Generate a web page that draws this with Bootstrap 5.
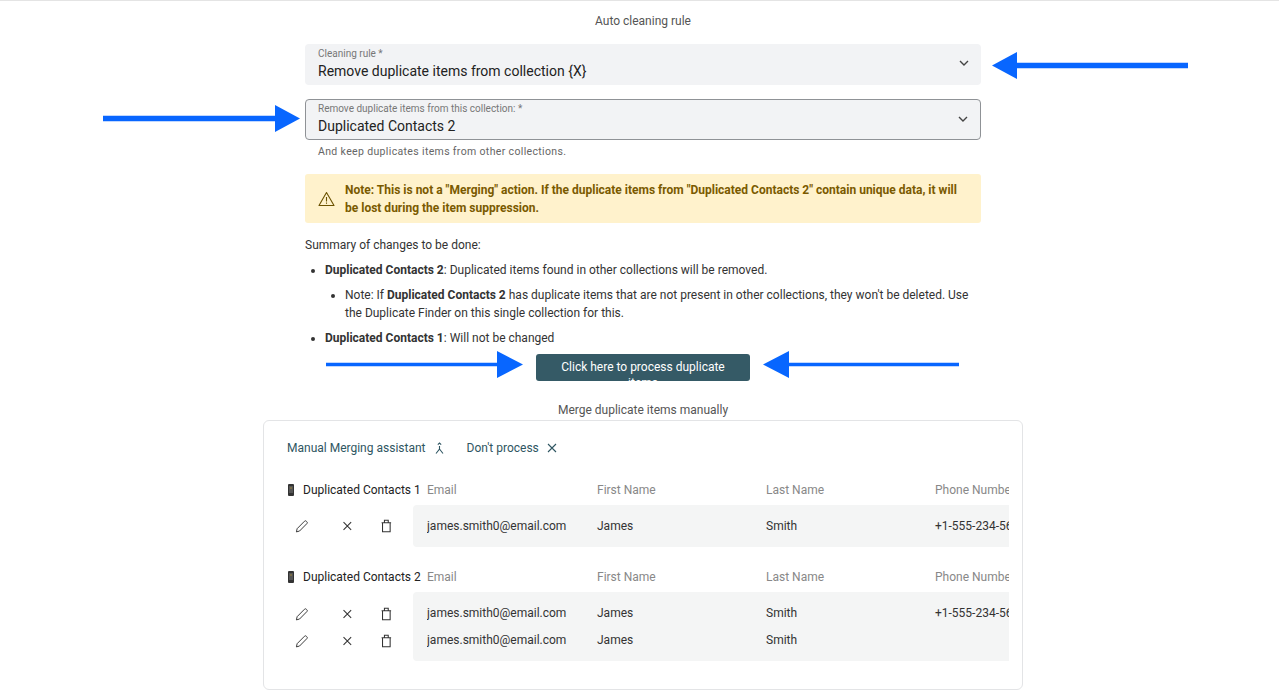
<!DOCTYPE html>
<html lang="en">
<head>
<meta charset="utf-8">
<title>Auto cleaning rule</title>
<link href="https://cdn.jsdelivr.net/npm/bootstrap@5.3.0/dist/css/bootstrap.min.css" rel="stylesheet">
<style>
html,body{height:700px;overflow:hidden}
body{font-family:Roboto,"Liberation Sans",sans-serif;color:#212529;background:#fff;border-top:1px solid #e4e4e4;position:relative;font-size:12px}
.pg{width:760px;margin-left:263px}
.head-t{height:43px;padding-top:13px;line-height:14px;text-align:center;color:#555;font-size:12px}
.form-area{width:676px;margin-left:42px}
.sel{height:41px;background:#f2f3f5;border-radius:4px;padding:4px 12px 0 13px;position:relative;margin-bottom:14px}
.sel.outl{border:1px solid #8f9296;padding:3px 11px 0 12px;margin-bottom:0}
.sel-l{font-size:10px;line-height:12px;color:#777;white-space:nowrap}
.sel-v{font-size:14px;line-height:20px;margin-top:1px;color:#222}
.chev{position:absolute;right:11px;top:15px;width:12px;height:8px}
.help-t{font-size:10.5px;letter-spacing:.35px;line-height:14px;color:#666;padding:5px 0 0 13px;height:34px}
.warn-box{height:49px;background:#fff2cc;border-radius:3px;color:#7a5a00;font-weight:700;font-size:12px;line-height:18px;padding:0 14px 0 13px;gap:10px;margin-bottom:14px}
.sum-p{line-height:16px;margin:0 0 8px;color:#333}
.sum-l{list-style:disc;margin:0;padding:0 0 0 20px;line-height:18px;color:#333}
.sum-l li{margin-bottom:7px}
.sum-l ul{padding-left:20px;margin:7px 0 0;list-style:disc}
.sum-l ul li{margin-bottom:0}
.go-btn{background:#355a66;color:#fff;font-size:12px;line-height:16px;padding:5px 10px;border:0;border-radius:3px;width:214px;height:27px}
.merge-t{text-align:center;color:#555;line-height:14px;height:14px;margin-top:22px}
.panel{height:270px;margin-top:3px;border:1px solid #e3e4e6;border-radius:6px;padding:0 13px 0 23px}
.tool-row{height:54px;padding-top:0;gap:22px;color:#2f5662}
.tool-row span{display:inline-flex;align-items:center;gap:8px}
.tbl-h{height:30px;align-items:center}
.coll{width:140px;flex:none;gap:8px;color:#222;white-space:nowrap}
.cols{display:grid;grid-template-columns:170px 169px 169px 169px;overflow:hidden;white-space:nowrap;flex:1;min-width:0;padding-left:0}
.cols.hd{color:#888;margin-left:0}
.tbl-wrap{overflow:hidden}
.acts{width:126px;flex:none;padding-left:7px;gap:0}
.acts svg{width:28px;margin-right:13px}
.rows{flex:1;min-width:0;background:#f4f5f5;border-radius:4px 0 0 4px;padding:0 0 0 14px;color:#333}
.lin{height:27px;align-items:center}
.rws-one{height:42px}
.rws-two{height:69px;padding-top:7px}
.blk2{margin-top:15px}
.arr{position:absolute;display:block}
</style>
</head>
<body>
<div class="pg">
  <div class="head-t">Auto cleaning rule</div>
  <div class="form-area">
    <div class="sel">
      <div class="sel-l">Cleaning rule *</div>
      <div class="sel-v">Remove duplicate items from collection {X}</div>
      <svg class="chev" viewBox="0 0 12 8" fill="none" stroke="#444" stroke-width="1.4"><path d="M2 2l4 4 4-4"/></svg>
    </div>
    <div class="sel outl">
      <div class="sel-l">Remove duplicate items from this collection: *</div>
      <div class="sel-v">Duplicated Contacts 2</div>
      <svg class="chev" viewBox="0 0 12 8" fill="none" stroke="#444" stroke-width="1.4"><path d="M2 2l4 4 4-4"/></svg>
    </div>
    <div class="help-t">And keep duplicates items from other collections.</div>
    <div class="warn-box d-flex align-items-center">
      <svg width="17" height="16" viewBox="0 0 17 16" fill="none" stroke="#6b5200" stroke-width="1.1" class="flex-shrink-0"><path d="M8.5 1.5L16 14.5H1z" stroke-linejoin="round"/><path d="M8.5 6v4.5M8.5 11.6v1.2"/></svg>
      <div>Note: This is not a "Merging" action. If the duplicate items from "Duplicated Contacts 2" contain unique data, it will be lost during the item suppression.</div>
    </div>
    <p class="sum-p">Summary of changes to be done:</p>
    <ul class="sum-l">
      <li><b>Duplicated Contacts 2</b>: Duplicated items found in other collections will be removed.
        <ul><li>Note: If <b>Duplicated Contacts 2</b> has duplicate items that are not present in other collections, they won't be deleted. Use the Duplicate Finder on this single collection for this.</li></ul>
      </li>
      <li><b>Duplicated Contacts 1</b>: Will not be changed</li>
    </ul>
    <div class="text-center"><button type="button" class="btn go-btn">Click here to process duplicate items</button></div>
  </div>
  <div class="merge-t">Merge duplicate items manually</div>
  <div class="panel">
    <div class="tool-row d-flex align-items-center">
      <span>Manual Merging assistant
        <svg width="11" height="12" viewBox="0 0 11 12" fill="none" stroke="#2f5662" stroke-width="1.1"><path d="M5.5 4v3L2 11.5M5.5 7L9 11.5"/><path d="M3.8 2.6L5.5 1l1.7 1.6"/></svg></span>
      <span>Don't process
        <svg width="10" height="10" viewBox="0 0 10 10" fill="none" stroke="#2f5662" stroke-width="1.1"><path d="M1 1l8 8M9 1l-8 8"/></svg></span>
    </div>
    <div class="tbl-wrap">
      <div class="d-flex tbl-h">
        <div class="coll d-flex align-items-center">
          <svg width="8" height="12" viewBox="0 0 8 12" class="flex-shrink-0"><rect x="1" width="6" height="12" rx="1" fill="#333"/><rect x="2" y="2" width="4" height="7" fill="#555"/><circle cx="4" cy="4" r=".7" fill="#b93"/></svg>
          <span>Duplicated Contacts 1</span>
        </div>
        <div class="cols hd"><div>Email</div><div>First Name</div><div>Last Name</div><div>Phone Number</div></div>
      </div>
      <div class="d-flex">
        <div class="acts d-flex align-items-center">
          <svg height="14" viewBox="0 0 28 14" fill="none" stroke="#333" stroke-width="1"><path d="M2.5 13.2l.8-3.4L11 2a1.3 1.3 0 0 1 1.9 0l.6.6a1.3 1.3 0 0 1 0 1.9L5.8 12.300z" stroke-linejoin="round"/></svg>
          <svg height="14" viewBox="0 0 28 14" fill="none" stroke="#333" stroke-width="1.1"><path d="M10 3l8 8M18 3l-8 8"/></svg>
          <svg height="14" viewBox="0 0 28 14" fill="none" stroke="#333" stroke-width="1.1"><path d="M9 3.500h10M10 3.500v9.500h8v-9.500M12 3.500v-2.500h4v2.500"/></svg>
        </div>
        <div class="rows rws-one d-flex align-items-center">
          <div class="cols w-100"><div>james.smith0@email.com</div><div>James</div><div>Smith</div><div>+1-555-234-5678</div></div>
        </div>
      </div>
      <div class="d-flex tbl-h blk2">
        <div class="coll d-flex align-items-center">
          <svg width="8" height="12" viewBox="0 0 8 12" class="flex-shrink-0"><rect x="1" width="6" height="12" rx="1" fill="#333"/><rect x="2" y="2" width="4" height="7" fill="#555"/><circle cx="4" cy="4" r=".7" fill="#b93"/></svg>
          <span>Duplicated Contacts 2</span>
        </div>
        <div class="cols hd"><div>Email</div><div>First Name</div><div>Last Name</div><div>Phone Number</div></div>
      </div>
      <div class="d-flex">
        <div class="acts pt-2">
          <div class="d-flex lin">
            <svg height="14" viewBox="0 0 28 14" fill="none" stroke="#333" stroke-width="1"><path d="M2.5 13.2l.8-3.4L11 2a1.3 1.3 0 0 1 1.9 0l.6.6a1.3 1.3 0 0 1 0 1.9L5.8 12.300z" stroke-linejoin="round"/></svg>
            <svg height="14" viewBox="0 0 28 14" fill="none" stroke="#333" stroke-width="1.1"><path d="M10 3l8 8M18 3l-8 8"/></svg>
            <svg height="14" viewBox="0 0 28 14" fill="none" stroke="#333" stroke-width="1.1"><path d="M9 3.500h10M10 3.500v9.500h8v-9.500M12 3.500v-2.500h4v2.500"/></svg>
          </div>
          <div class="d-flex lin">
            <svg height="14" viewBox="0 0 28 14" fill="none" stroke="#333" stroke-width="1"><path d="M2.5 13.2l.8-3.4L11 2a1.3 1.3 0 0 1 1.9 0l.6.6a1.3 1.3 0 0 1 0 1.9L5.8 12.300z" stroke-linejoin="round"/></svg>
            <svg height="14" viewBox="0 0 28 14" fill="none" stroke="#333" stroke-width="1.1"><path d="M10 3l8 8M18 3l-8 8"/></svg>
            <svg height="14" viewBox="0 0 28 14" fill="none" stroke="#333" stroke-width="1.1"><path d="M9 3.500h10M10 3.500v9.500h8v-9.500M12 3.500v-2.500h4v2.500"/></svg>
          </div>
        </div>
        <div class="rows rws-two">
          <div class="cols lin w-100 align-items-center"><div>james.smith0@email.com</div><div>James</div><div>Smith</div><div>+1-555-234-5678</div></div>
          <div class="cols lin w-100 align-items-center"><div>james.smith0@email.com</div><div>James</div><div>Smith</div><div></div></div>
        </div>
      </div>
    </div>
  </div>
</div>
<svg class="arr" style="left:992px;top:50px" width="197" height="30" viewBox="0 0 197 30" fill="#0866ff"><path d="M0 14.500L25 1v10.800h171v5.400H25V28z"/></svg>
<svg class="arr" style="left:102px;top:103px" width="198" height="30" viewBox="0 0 198 30" fill="#0866ff"><path d="M198 14.500L173 1v10.800H1v5.400h172V28z"/></svg>
<svg class="arr" style="left:325px;top:349px" width="198" height="30" viewBox="0 0 198 30" fill="#0866ff"><path d="M198 14.500L172 1v11.800H1v3.400h171V28z"/></svg>
<svg class="arr" style="left:763px;top:349px" width="197" height="30" viewBox="0 0 197 30" fill="#0866ff"><path d="M0 14.500L26 1v11.800h170v3.400H26V28z"/></svg>
<script src="https://cdn.jsdelivr.net/npm/bootstrap@5.3.0/dist/js/bootstrap.bundle.min.js"></script>
</body>
</html>
